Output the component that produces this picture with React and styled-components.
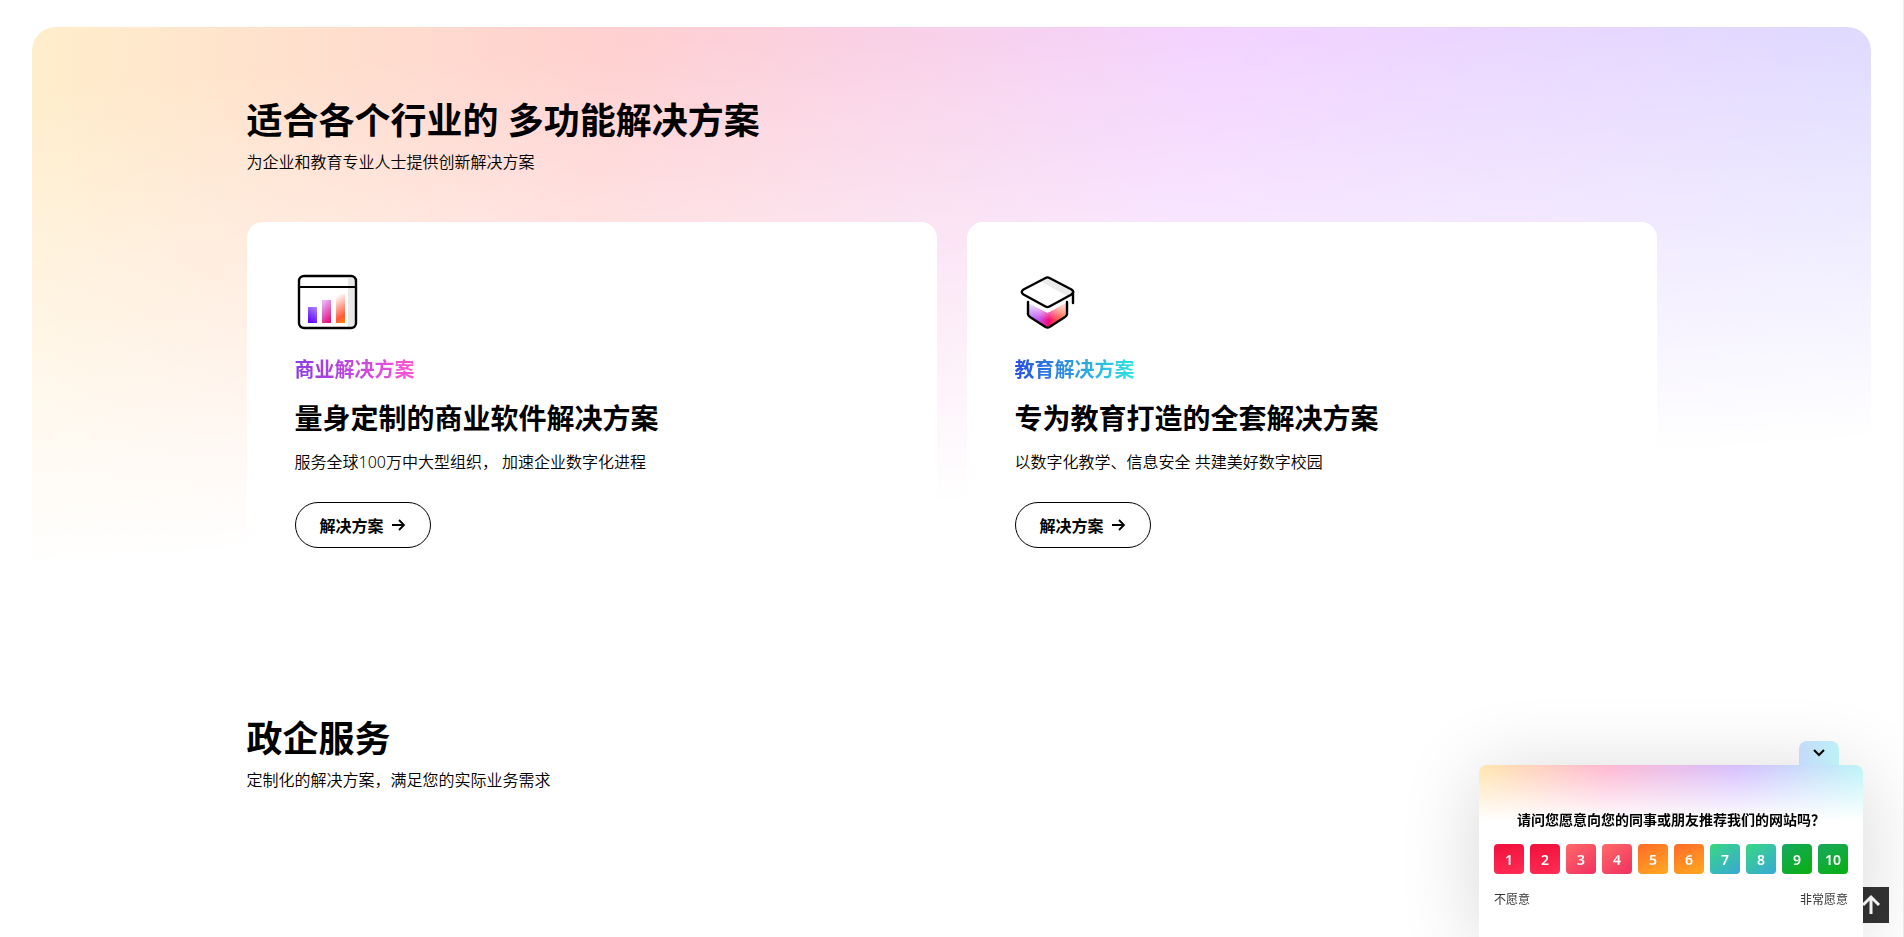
import React from "react";
import styled, { createGlobalStyle } from "styled-components";

const GlobalStyle = createGlobalStyle`
  * {
    box-sizing: border-box;
  }

  body {
    margin: 0;
    background-color: #fff;
    color: #000;
    font-family: "Noto Sans", "Noto Sans CJK SC", sans-serif;
    font-size: 16px;
    line-height: 24px;
    overflow-x: hidden;
  }

  h2, h3, h4, p {
    margin: 0;
  }

  p {
    font-weight: 350;
  }

  button {
    font-family: inherit;
    cursor: pointer;
  }
`;

const solutions = [
    {
        id: "business",
        icon: <ChartIcon />,
        from: "#8a3ae8",
        to: "#ff55d4",
        label: "商业解决方案",
        title: "量身定制的商业软件解决方案",
        text: "服务全球100万中大型组织， 加速企业数字化进程",
    },
    {
        id: "education",
        icon: <SchoolIcon />,
        from: "#2a4fe0",
        to: "#2fe6e0",
        label: "教育解决方案",
        title: "专为教育打造的全套解决方案",
        text: "以数字化教学、信息安全 共建美好数字校园",
    },
];

const scores = [
    ["#f0103c", "#ff2d55", "170deg"],
    ["#f0103c", "#ff2d55", "170deg"],
    ["#ff6a68", "#f03060", "145deg"],
    ["#ff6a68", "#f03060", "145deg"],
    ["#ff6a28", "#ffab20", "155deg"],
    ["#ff6a28", "#ffab20", "155deg"],
    ["#38d880", "#38a8d8", "145deg"],
    ["#38d880", "#38a8d8", "145deg"],
    ["#18a860", "#08b010", "145deg"],
    ["#18a860", "#08b010", "145deg"],
];

function ChartIcon() {
    return (
        <svg width="64" height="64" viewBox="0 0 64 64" fill="none" aria-hidden="true">
            <defs>
                <linearGradient id="barLow" x1="0.7" y1="0" x2="0.3" y2="1">
                    <stop stopColor="#a67cf8" />
                    <stop offset="1" stopColor="#6400ff" />
                </linearGradient>
                <linearGradient id="barMid" x1="0.3" y1="0" x2="0.7" y2="1">
                    <stop stopColor="#e8b4ff" />
                    <stop offset="1" stopColor="#e0107c" />
                </linearGradient>
                <linearGradient id="barHigh" x1="0.4" y1="0" x2="0.6" y2="1">
                    <stop stopColor="#fff" />
                    <stop offset="0.8" stopColor="#ff5a38" />
                    <stop offset="1" stopColor="#ff8018" />
                </linearGradient>
            </defs>
            <path d="M53 8h4q4 0 4 4v41q0 4-4 4h-4z" fill="#e8e8e8" />
            <rect x="13" y="37" width="9" height="16" fill="url(#barLow)" />
            <rect x="27" y="30" width="9" height="23" fill="url(#barMid)" />
            <rect x="41" y="24" width="9" height="29" fill="url(#barHigh)" />
            <rect x="4" y="6" width="57" height="52" rx="5" stroke="#000" strokeWidth="2.4" />
            <path d="M4 17h57" stroke="#000" strokeWidth="2.2" />
        </svg>
    );
}

function SchoolIcon() {
    return (
        <svg width="64" height="64" viewBox="0 0 64 64" fill="none" aria-hidden="true">
            <defs>
                <linearGradient id="capBody" x1="13" y1="40" x2="52" y2="44" gradientUnits="userSpaceOnUse">
                    <stop stopColor="#b070ff" />
                    <stop offset="0.3" stopColor="#c850f8" />
                    <stop offset="0.55" stopColor="#f00c78" />
                    <stop offset="0.75" stopColor="#ff4c48" />
                    <stop offset="1" stopColor="#ff8040" />
                </linearGradient>
                <linearGradient id="capFade" x1="0" y1="34" x2="0" y2="50" gradientUnits="userSpaceOnUse">
                    <stop stopColor="#fff" stopOpacity="0.8" />
                    <stop offset="1" stopColor="#fff" stopOpacity="0" />
                </linearGradient>
            </defs>
            <path d="M14 34l18.500 9L52 33v12q0 2-2 3L32.500 57 16 48q-2-1-2-3z" fill="url(#capBody)" />
            <path d="M14 34l18.500 9L52 33v12q0 2-2 3L32.500 57 16 48q-2-1-2-3z" fill="url(#capFade)" />
            <path d="M25 11l8-4 24 13q2 2 0 4l-5 2z" fill="#ebebeb" />
            <path
                d="M30.500 8q2-1.200 4 0L56.500 19.500q3.500 2 0 5L34.500 36.500q-2 1.200-4 0L8.500 24.500q-3.500-2.500 0-5z"
                stroke="#000"
                strokeWidth="2.4"
                strokeLinejoin="round"
            />
            <path d="M58 22v11" stroke="#000" strokeWidth="2.4" strokeLinecap="round" />
            <path
                d="M13 32v12q0 2 2 3l15.500 10q2 1.200 4 0L50 47q2-1 2-3V32"
                stroke="#000"
                strokeWidth="2.4"
                strokeLinecap="round"
                strokeLinejoin="round"
            />
        </svg>
    );
}

const App = () => {
    return (
        <Page>
            <GlobalStyle />
            <Hero>
                <Container>
                    <Title>适合各个行业的 多功能解决方案</Title>
                    <p>为企业和教育专业人士提供创新解决方案</p>
                    <Cards>
                        {solutions.map((item) => (
                            <Card key={item.id}>
                                {item.icon}
                                <Label $from={item.from} $to={item.to}>{item.label}</Label>
                                <CardTitle>{item.title}</CardTitle>
                                <p>{item.text}</p>
                                <MoreButton type="button">
                                    解决方案
                                    <svg width="16" height="16" viewBox="0 0 16 16" fill="none" aria-hidden="true">
                                        <path d="M2 8h12M9 3l5 5-5 5" stroke="#000" strokeWidth="1.8" />
                                    </svg>
                                </MoreButton>
                            </Card>
                        ))}
                    </Cards>
                </Container>
            </Hero>
            <Services>
                <Container>
                    <Title>政企服务</Title>
                    <p>定制化的解决方案，满足您的实际业务需求</p>
                </Container>
            </Services>
            <TopButton type="button" aria-label="返回顶部">
                <svg width="24" height="24" viewBox="0 0 24 24" fill="none" aria-hidden="true">
                    <path d="M12 21V4M4 12l8-8 8 8" stroke="#fff" strokeWidth="3" />
                </svg>
            </TopButton>
            <Survey>
                <Toggle type="button" aria-label="收起">
                    <svg width="12" height="8" viewBox="0 0 12 8" fill="none" aria-hidden="true">
                        <path d="M1 1l5 5 5-5" stroke="#000" strokeWidth="2" />
                    </svg>
                </Toggle>
                <Question>请问您愿意向您的同事或朋友推荐我们的网站吗？</Question>
                <Scores>
                    {scores.map(([from, to, angle], index) => (
                        <Score key={index} type="button" $from={from} $to={to} $angle={angle}>
                            {index + 1}
                        </Score>
                    ))}
                </Scores>
                <Ends>
                    <span>不愿意</span>
                    <span>非常愿意</span>
                </Ends>
            </Survey>
        </Page>
    );
};

const Page = styled.div`
  min-height: 100vh;
  padding: 27px 32px 0;
  border-right: 1px solid #ececec;
`;

const Hero = styled.section`
  padding: 72px 32px 24px;
  border-radius: 24px 24px 0 0;
  background-image:
    linear-gradient(176deg, rgba(255, 255, 255, 0) 8%, #fff 75%),
    linear-gradient(95deg, #ffeecb 0%, #ffd0d0 31%, #f3d0ff 62%, #d8d4ff 100%);
`;

const Container = styled.div`
  max-width: 1410px;
  margin: 0 auto;
`;

const Title = styled.h2`
  margin-bottom: 7px;
  font-size: 36px;
  line-height: 44px;
  font-weight: 700;
`;

const Cards = styled.div`
  display: grid;
  grid-template-columns: 1fr 1fr;
  gap: 30px;
  margin-top: 48px;
`;

const Card = styled.article`
  display: flex;
  flex-direction: column;
  align-items: flex-start;
  padding: 48px;
  border-radius: 16px;
  background-color: #fff;
`;

const Label = styled.h4`
  margin-top: 20px;
  font-size: 20px;
  line-height: 32px;
  font-weight: 700;
  color: transparent;
  background-image: linear-gradient(90deg, ${(props) => props.$from}, ${(props) => props.$to});
  background-clip: text;
`;

const CardTitle = styled.h3`
  margin: 12px 0;
  font-size: 28px;
  line-height: 40px;
  font-weight: 700;
`;

const MoreButton = styled.button`
  display: flex;
  align-items: center;
  gap: 6px;
  height: 46px;
  margin-top: 28px;
  padding: 0 24px;
  border: 1px solid #000;
  border-radius: 23px;
  background-color: transparent;
  color: #000;
  font-size: 16px;
  font-weight: 700;
`;

const Services = styled.section`
  padding: 97px 32px;
`;

const TopButton = styled.button`
  position: fixed;
  right: 15px;
  bottom: 14px;
  display: flex;
  align-items: center;
  justify-content: center;
  width: 36px;
  height: 36px;
  padding: 0;
  border: 0;
  background-color: #333;
`;

const Survey = styled.aside`
  position: fixed;
  right: 41px;
  bottom: 0;
  width: 384px;
  height: 172px;
  padding: 44px 15px 0;
  border-radius: 8px 8px 0 0;
  background-color: #fff;
  background-image:
    linear-gradient(180deg, rgba(255, 255, 255, 0), #fff 56px),
    linear-gradient(95deg, #ffe6ae 0%, #ffb8d2 32%, #d6bfff 65%, #b8fbf6 100%);
  box-shadow: 0 8px 80px rgba(0, 0, 0, 0.16);
`;

const Toggle = styled.button`
  position: absolute;
  top: -24px;
  right: 24px;
  display: flex;
  align-items: center;
  justify-content: center;
  width: 40px;
  height: 24px;
  padding: 0;
  border: 0;
  border-radius: 8px 8px 0 0;
  background-image: linear-gradient(90deg, #c5daf9, #bdf1f7);
`;

const Question = styled.h4`
  font-size: 14px;
  line-height: 22px;
  font-weight: 700;
  text-align: center;
`;

const Scores = styled.div`
  display: flex;
  justify-content: space-between;
  margin-top: 13px;
`;

const Score = styled.button`
  width: 30px;
  height: 30px;
  padding: 0;
  border: 0;
  border-radius: 4px;
  background-image: linear-gradient(${(props) => props.$angle}, ${(props) => props.$from}, ${(props) => props.$to});
  color: #fff;
  font-size: 14px;
  font-weight: 600;
`;

const Ends = styled.div`
  display: flex;
  justify-content: space-between;
  margin-top: 16px;
  color: #333;
  font-size: 12px;
  line-height: 20px;
`;

export default App;
